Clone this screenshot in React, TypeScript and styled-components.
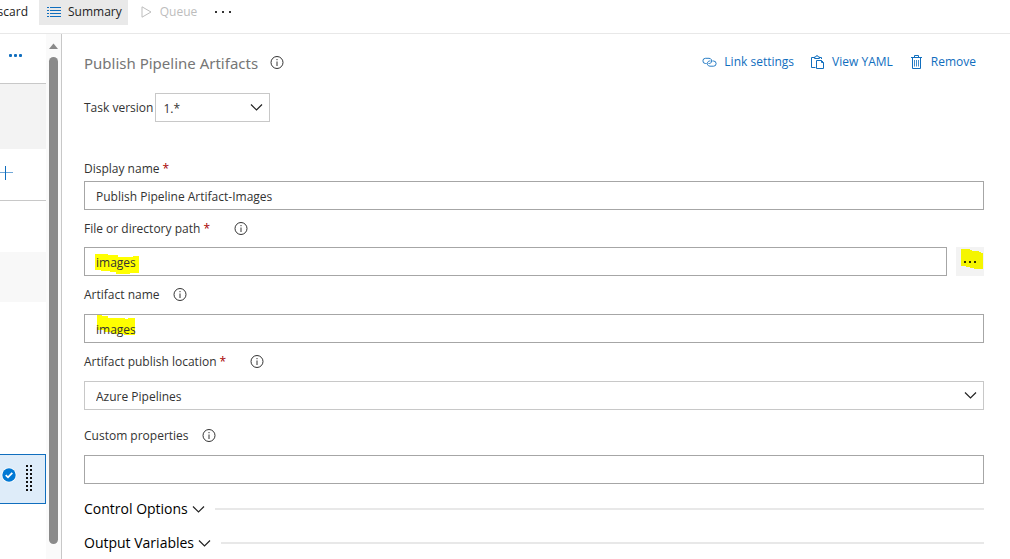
import React from "react";
import styled, { createGlobalStyle } from "styled-components";

const GlobalStyle = createGlobalStyle`
  * { box-sizing: border-box; }
  html, body, #root { height: 100%; }
  body {
    margin: 0;
    overflow: hidden;
    background: #fff;
    color: #333;
    font-family: "Open Sans", "Noto Sans", sans-serif;
    font-size: 12px;
    line-height: 16px;
  }
  button, input, select { font: inherit; color: inherit; margin: 0; border-radius: 0; }
  button { background: none; border: 0; padding: 0; white-space: nowrap; }
  svg { display: block; flex: none; }
`;

const Page = styled.div`
  display: flex;
  flex-direction: column;
  height: 100vh;
`;

const Toolbar = styled.header`
  display: flex;
  flex: none;
  align-items: flex-start;
  height: 34px;
  border-bottom: 1px solid #e8e8e8;
`;

const ToolButton = styled.button<{ $active?: boolean }>`
  display: flex;
  align-items: center;
  gap: 7px;
  height: 25px;
  padding: 0 6px 1px 8px;
  background: ${(p) => (p.$active ? "#e9e9e9" : "transparent")};
  color: #222;
  &:disabled { color: #bdbdbd; }
`;

const ClippedButton = styled(ToolButton)`
  width: 39px;
  padding: 0 11px 1px 0;
  justify-content: flex-end;
  overflow: hidden;
`;

const QueueButton = styled(ToolButton)`
  gap: 8px;
  padding: 0 10px 1px 8px;
`;

const Body = styled.div`
  display: flex;
  flex: 1;
  min-height: 0;
`;

const Sidebar = styled.nav`
  display: flex;
  flex: none;
  flex-direction: column;
  width: 46px;
`;

const SideRow = styled.div<{ $height: number; $shade?: string; $line?: boolean }>`
  display: flex;
  flex: none;
  align-items: center;
  height: ${(p) => p.$height}px;
  background: ${(p) => p.$shade ?? "transparent"};
  border-bottom: ${(p) => (p.$line ? "1px solid #c8c8c8" : "0")};
`;

const MoreRow = styled(SideRow)`
  padding: 0 0 6px 9px;
`;

const SelectedTask = styled.div`
  display: flex;
  flex: none;
  align-items: center;
  gap: 9px;
  height: 50px;
  padding: 0 0 2px 1px;
  background: #deecf9;
  border: 1px solid #106ebe;
  border-left: 0;
`;

const TickIcon = styled.svg`
  margin-bottom: 6px;
`;

const ScrollTrack = styled.div`
  display: flex;
  flex: none;
  flex-direction: column;
  align-items: center;
  gap: 8px;
  width: 16px;
  padding: 9px 0 15px;
  background: #fafafa;
  border-right: 1px solid #c8c8c8;
`;

const ScrollThumb = styled.div`
  flex: 1;
  width: 9px;
  border-radius: 5px;
  background: #8a8a8a;
`;

const Main = styled.main`
  flex: 1;
  min-width: 0;
  padding: 14px 26px 0 22px;
`;

const TitleBar = styled.div`
  display: flex;
  align-items: center;
  justify-content: space-between;
  height: 30px;
`;

const TitleGroup = styled.div`
  display: flex;
  align-items: center;
  gap: 12px;
`;

const Title = styled.h1`
  margin: 0;
  color: #767676;
  font-family: "Noto Sans", sans-serif;
  font-size: 15px;
  font-weight: 400;
  line-height: 22px;
`;

const Actions = styled.div`
  display: flex;
  gap: 17px;
  padding: 0 8px 2px 0;
`;

const ActionLink = styled.a`
  display: flex;
  align-items: center;
  gap: 7px;
  color: #106ebe;
  text-decoration: none;
`;

const VersionRow = styled.div`
  display: flex;
  align-items: center;
  gap: 2px;
  height: 29px;
  margin: 15px 0 35px;
`;

const SelectWrap = styled.div<{ $width: string }>`
  display: flex;
  align-items: center;
  position: relative;
  width: ${(p) => p.$width};
`;

const Select = styled.select<{ $inset: number }>`
  appearance: none;
  width: 100%;
  height: 29px;
  padding: 2px 30px 0 ${(p) => p.$inset}px;
  border: 1px solid #c8c8c8;
  background: #fff;
`;

const SelectArrow = styled.svg`
  position: absolute;
  right: 7px;
  pointer-events: none;
`;

const Field = styled.div<{ $top?: number }>`
  margin-top: ${(p) => p.$top ?? 0}px;
`;

const LabelRow = styled.div<{ $height: number; $gap: number }>`
  display: flex;
  align-items: center;
  gap: ${(p) => p.$gap}px;
  height: ${(p) => p.$height}px;
`;

const Required = styled.span`
  color: #a80000;
`;

const InputRow = styled.div`
  display: flex;
  gap: 9px;
`;

const InputWrap = styled.div`
  position: relative;
  flex: 1;
`;

const Input = styled.input`
  position: relative;
  display: block;
  width: 100%;
  height: 29px;
  padding: 1px 11px 0;
  border: 1px solid #a6a6a6;
  background: transparent;
  outline: 0;
`;

const Marker = styled.svg`
  position: absolute;
  top: 0;
  left: 11px;
`;

const BrowseButton = styled.button`
  width: 28px;
  height: 29px;
  background: #f3f3f3;
`;

const Sections = styled.div`
  margin-top: 8px;
`;

const SectionRow = styled.div`
  display: flex;
  align-items: center;
  gap: 10px;
  height: 34px;
  &::after {
    content: "";
    flex: 1;
    height: 2px;
    background: #e8e8e8;
  }
`;

const SectionButton = styled.button`
  display: flex;
  align-items: center;
  gap: 4px;
  color: #000;
  font-size: 14px;
  line-height: 20px;
`;

const InfoIcon = () => (
  <svg width="14" height="14" viewBox="0 0 14 14" fill="none" stroke="#333" strokeWidth="1">
    <circle cx="7" cy="6.5" r="6" />
    <path d="M7 5.500v4.500M7 3v1.200" />
  </svg>
);

const chevronPath = "M1 1.5 6.5 7 12 1.5";

const Chevron = () => (
  <svg width="13" height="9" viewBox="0 0 13 9" fill="none" stroke="#222" strokeWidth="1.2">
    <path d={chevronPath} />
  </svg>
);

const DropArrow = () => (
  <SelectArrow width="13" height="9" viewBox="0 0 13 9" fill="none" stroke="#222" strokeWidth="1.2">
    <path d={chevronPath} />
  </SelectArrow>
);

const Dots = ({ color, gap, size }: { color: string; gap: number; size: number }) => (
  <svg width={gap * 2 + size} height={size} fill={color}>
    {[0, 1, 2].map((i) => (
      <rect key={i} x={i * gap} width={size} height={size} rx={size > 2 ? 1 : 0} />
    ))}
  </svg>
);

const FieldLabel = ({ id, text, required, info, height }: {
  id: string; text: string; required?: boolean; info?: boolean; height: number;
}) => (
  <LabelRow $height={height} $gap={required ? 24 : 13}>
    <label htmlFor={id}>
      {text}
      {required && <Required> *</Required>}
    </label>
    {info && <InfoIcon />}
  </LabelRow>
);

export default function App() {
  return (
    <Page>
      <GlobalStyle />
      <Toolbar>
        <ClippedButton>Discard</ClippedButton>
        <ToolButton $active>
          <svg width="14" height="11" viewBox="0 0 14 11" stroke="#106ebe" strokeWidth="1">
            <path d="M0 .5h2M3 .5h11M0 3.5h2M3 3.5h11M0 6.5h2M3 6.5h11M0 9.5h2M3 9.5h11" />
          </svg>
          Summary
        </ToolButton>
        <QueueButton disabled>
          <svg width="16" height="12" viewBox="0 0 16 12" fill="none" stroke="#bdbdbd">
            <path d="M6 .8v10.400L15 6z" />
          </svg>
          Queue
        </QueueButton>
        <ToolButton aria-label="More actions">
          <Dots color="#333" gap={7} size={2} />
        </ToolButton>
      </Toolbar>
      <Body>
        <Sidebar>
          <MoreRow $height={50} $line>
            <button aria-label="Pipeline menu"><Dots color="#106ebe" gap={5} size={3} /></button>
          </MoreRow>
          <SideRow $height={65} $shade="#f3f3f3" />
          <SideRow $height={52} $line>
            <button aria-label="Add task">
              <svg width="13" height="20" fill="none" stroke="#106ebe">
                <path d="M5.500 1v14" />
                <path d="M0 7.500h13" strokeOpacity=".6" />
              </svg>
            </button>
          </SideRow>
          <SideRow $height={51} />
          <SideRow $height={50} $shade="#f8f8f8" />
          <SideRow $height={152} />
          <SelectedTask>
            <TickIcon width="16" height="16" viewBox="0 0 16 16">
              <circle cx="8" cy="8" r="7.5" fill="#fff" />
              <circle cx="8" cy="8" r="6.7" fill="#0078d4" />
              <path d="M4.700 8.200 7 10.300l4.300-4.500" fill="none" stroke="#fff" strokeWidth="1.8" />
            </TickIcon>
            <svg width="7" height="26" fill="#111">
              {[0, 1, 2, 3, 4, 5, 6].map((i) => (
                <React.Fragment key={i}>
                  <rect x="0" y={i * 4} width="2" height="2" />
                  <rect x="4" y={i * 4} width="2" height="2" />
                </React.Fragment>
              ))}
            </svg>
          </SelectedTask>
        </Sidebar>
        <ScrollTrack>
          <svg width="9" height="6" fill="#8a8a8a"><path d="M4.500 .5 9 6H0z" /></svg>
          <ScrollThumb />
        </ScrollTrack>
        <Main>
          <TitleBar>
            <TitleGroup>
              <Title>Publish Pipeline Artifacts</Title>
              <InfoIcon />
            </TitleGroup>
            <Actions>
              <ActionLink href="#link">
                <svg width="15" height="11" viewBox="0 0 15 11" fill="none" stroke="#106ebe" strokeWidth=".9">
                  <path d="M4.500 6.500H3.500A2.600 2.600 0 0 1 3.500 1.300H7a2.800 2.600 0 0 1 2.300 4C8.700 6.300 7.700 6.700 6.500 6.500" />
                  <path d="M10.500 4h1a2.600 2.600 0 0 1 0 5.200H8a2.800 2.600 0 0 1-2.300-4C6.300 4.200 7.300 3.800 8.500 4" />
                </svg>
                Link settings
              </ActionLink>
              <ActionLink href="#yaml">
                <svg width="14" height="14" viewBox="0 0 14 14" fill="none" stroke="#106ebe">
                  <path d="M4.500 12.500h-4v-10h3M8.500 2.500h2v1.500M3.500 3.500v-1.500h1.200a1.200 1.200 0 0 1 2.600 0h1.200v1.500z" />
                  <path d="M5.500 5.500h5l2 2v6h-7z" />
                  <path d="M10.500 5.500v2h2" />
                </svg>
                View YAML
              </ActionLink>
              <ActionLink href="#remove">
                <svg width="14" height="14" viewBox="0 0 14 14" fill="none" stroke="#106ebe">
                  <path d="M1 2.500h11M4.500 2.500v-2h4v2M2.500 2.500v11h8v-11" />
                  <path d="M4.500 5v6.500M6.500 5v6.500M8.500 5v6.500" strokeOpacity=".8" />
                </svg>
                Remove
              </ActionLink>
            </Actions>
          </TitleBar>

          <VersionRow>
            <label htmlFor="version">Task version</label>
            <SelectWrap $width="115px">
              <Select id="version" $inset={7}><option>1.*</option></Select>
              <DropArrow />
            </SelectWrap>
          </VersionRow>

          <Field>
            <FieldLabel id="display" text="Display name" required height={24} />
            <Input id="display" defaultValue="Publish Pipeline Artifact-Images" />
          </Field>

          <Field>
            <FieldLabel id="path" text="File or directory path" required info height={37} />
            <InputRow>
              <InputWrap>
                <Marker width="46" height="29" fill="#ff0">
                  <path d="M0 7h13v1h10v2h15v-1h6v17h-9v1H21v-2h-6v-1H6v-1H0z" />
                </Marker>
                <Input id="path" defaultValue="images" />
              </InputWrap>
              <BrowseButton aria-label="Browse">
                <svg width="28" height="29">
                  <path d="M5 2h9v1h2v1h7v1h2v1h2v16h-9v-1h-4v-1h-4v-1H5z" fill="#f5f500" />
                  <path d="M8 14h2v2H8zM13 14h2v2h-2zM18 14h2v2h-2z" fill="#333300" />
                </svg>
              </BrowseButton>
            </InputRow>
          </Field>

          <Field>
            <FieldLabel id="artifact" text="Artifact name" info height={38} />
            <InputWrap>
              <Marker width="46" height="29" fill="#ff0">
                <path d="M2 1h5v1h6v2h17v1h3v-1h7v17H29v-1H17v-2H9v-2H2z" />
              </Marker>
              <Input id="artifact" defaultValue="images" />
            </InputWrap>
          </Field>

          <Field>
            <FieldLabel id="location" text="Artifact publish location" required info height={38} />
            <SelectWrap $width="100%">
              <Select id="location" $inset={11}><option>Azure Pipelines</option></Select>
              <DropArrow />
            </SelectWrap>
          </Field>

          <Field $top={7}>
            <FieldLabel id="custom" text="Custom properties" info height={38} />
            <Input id="custom" />
          </Field>

          <Sections>
            <SectionRow>
              <SectionButton>Control Options <Chevron /></SectionButton>
            </SectionRow>
            <SectionRow>
              <SectionButton>Output Variables <Chevron /></SectionButton>
            </SectionRow>
          </Sections>
        </Main>
      </Body>
    </Page>
  );
}
